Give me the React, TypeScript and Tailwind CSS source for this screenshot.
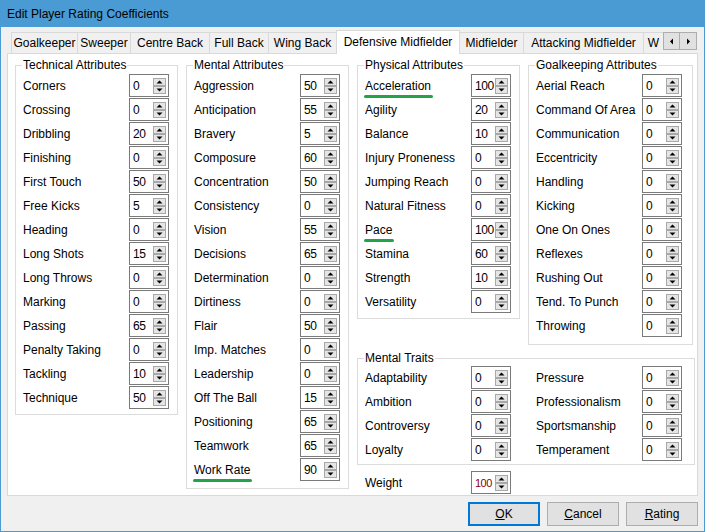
import React from "react";

type Row = [string, string, string?];

const technical: Row[] = [
  ["Corners", "0"], ["Crossing", "0"], ["Dribbling", "20"], ["Finishing", "0"],
  ["First Touch", "50"], ["Free Kicks", "5"], ["Heading", "0"], ["Long Shots", "15"],
  ["Long Throws", "0"], ["Marking", "0"], ["Passing", "65"], ["Penalty Taking", "0"],
  ["Tackling", "10"], ["Technique", "50"],
];
const mental: Row[] = [
  ["Aggression", "50"], ["Anticipation", "55"], ["Bravery", "5"], ["Composure", "60"],
  ["Concentration", "50"], ["Consistency", "0"], ["Vision", "55"], ["Decisions", "65"],
  ["Determination", "0"], ["Dirtiness", "0"], ["Flair", "50"], ["Imp. Matches", "0"],
  ["Leadership", "0"], ["Off The Ball", "15"], ["Positioning", "65"], ["Teamwork", "65"],
  ["Work Rate", "90", "u"],
];
const physical: Row[] = [
  ["Acceleration", "100", "u"], ["Agility", "20"], ["Balance", "10"], ["Injury Proneness", "0"],
  ["Jumping Reach", "0"], ["Natural Fitness", "0"], ["Pace", "100", "u"], ["Stamina", "60"],
  ["Strength", "10"], ["Versatility", "0"],
];
const goalkeeping: Row[] = [
  ["Aerial Reach", "0"], ["Command Of Area", "0"], ["Communication", "0"], ["Eccentricity", "0"],
  ["Handling", "0"], ["Kicking", "0"], ["One On Ones", "0"], ["Reflexes", "0"],
  ["Rushing Out", "0"], ["Tend. To Punch", "0"], ["Throwing", "0"],
];
const traits1: Row[] = [["Adaptability", "0"], ["Ambition", "0"], ["Controversy", "0"], ["Loyalty", "0"]];
const traits2: Row[] = [["Pressure", "0"], ["Professionalism", "0"], ["Sportsmanship", "0"], ["Temperament", "0"]];

const tabs: [string, number, boolean?][] = [
  ["Goalkeeper", 66], ["Sweeper", 53], ["Centre Back", 79], ["Full Back", 59],
  ["Wing Back", 68], ["Defensive Midfielder", 124, true], ["Midfielder", 63],
  ["Attacking Midfielder", 120], ["W", 20],
];

function Arrows() {
  return (
    <svg width="13" height="16" viewBox="0 0 13 16" className="block">
      <rect x="0.5" y="0.5" width="12" height="7" fill="#e5e5e5" stroke="#a8a8a8" />
      <rect x="0.5" y="8.5" width="12" height="7" fill="#e5e5e5" stroke="#a8a8a8" />
      <polygon points="3.5,5.5 9.5,5.5 6.5,2.5" fill="#000" />
      <polygon points="3.5,10.5 9.5,10.5 6.5,13.5" fill="#000" />
    </svg>
  );
}

function Spin({ value, red }: { value: string; red?: boolean }) {
  return (
    <div className="flex h-[23px] w-[40px] items-center border border-[#7a7a7a] bg-white">
      <span
        className={
          red
            ? "flex-1 pl-[3px] pt-[1px] text-[11px] leading-[21px] text-[#8b0000] font-['Liberation_Sans_Narrow','Liberation_Sans',sans-serif] tracking-[-0.5px]"
            : "flex-1 pl-[3px] pt-[1px] leading-[21px] tracking-[-0.4px]"
        }
      >
        {value}
      </span>
      <div className="mr-[2px]">
        <Arrows />
      </div>
    </div>
  );
}

function Label({ text, underline }: { text: string; underline?: boolean }) {
  return (
    <span className="relative inline-block pt-[1px] leading-[23px]">
      {text}
      {underline && (
        <span className="absolute left-[-1px] right-[-2px] top-[21px] h-[3px] rounded-full bg-[#22a34a]" />
      )}
    </span>
  );
}

function Rows({ rows }: { rows: Row[] }) {
  return (
    <div className="flex flex-col">
      {rows.map(([l, v, u]) => (
        <div key={l} className="flex h-[24px] pl-[7px]">
          <div className="w-[106px] whitespace-nowrap">
            <Label text={l} underline={u === "u"} />
          </div>
          <Spin value={v} />
        </div>
      ))}
    </div>
  );
}

function Group({
  title,
  width,
  children,
  pb = "pb-[5px]",
}: {
  title: string;
  width: string;
  children: React.ReactNode;
  pb?: string;
}) {
  return (
    <fieldset className={`border border-[#dcdcdc] ${width} ${pb}`}>
      <legend className="ml-[6px] px-[1px] leading-[16px]">{title}</legend>
      <div className="pt-[1px]">{children}</div>
    </fieldset>
  );
}

export default function App() {
  return (
    <div className="flex h-[532px] w-[705px] flex-col text-[12px] text-black font-['Liberation_Sans',Arial,sans-serif]">
      <div className="flex h-[27px] items-center bg-[#4a9bd3] pl-[7px]">Edit Player Rating Coefficients</div>
      <div className="flex flex-1 flex-col border-x border-b border-[#4a9bd3] bg-[#f0f0f0]">
        {/* tab strip */}
        <div className="relative z-10 mt-[3px] flex h-[24px] w-[697px] items-end pl-[10px]">
          {tabs.map(([name, w, sel], i) =>
            sel ? (
              <div
                key={name}
                style={{ width: w }}
                className="flex h-[24px] shrink-0 items-center justify-center whitespace-nowrap border-x border-t border-[#d9d9d9] bg-white pb-[2px]"
              >
                {name}
              </div>
            ) : (
              <div
                key={name}
                style={{ width: w }}
                className={`mb-[1px] flex h-[21px] shrink-0 items-center justify-center whitespace-nowrap border-t border-[#d9d9d9] bg-[#f0f0f0] ${
                  i === 6 ? "" : "border-l"
                }`}
              >
                {name}
              </div>
            )
          )}
          <div className="absolute left-[662px] top-[2px] flex">
            <div className="flex h-[18px] w-[17px] items-center justify-center border border-[#adadad] bg-[#e1e1e1]">
              <svg width="6" height="7" viewBox="0 0 6 7">
                <polygon points="4,0.5 4,6.5 1,3.5" fill="#000" />
              </svg>
            </div>
            <div className="flex h-[18px] w-[17px] items-center justify-center border border-l-0 border-[#adadad] bg-[#e1e1e1]">
              <svg width="6" height="7" viewBox="0 0 6 7">
                <polygon points="2,0.5 2,6.5 5,3.5" fill="#000" />
              </svg>
            </div>
          </div>
        </div>
        {/* tab page */}
        <div className="-mt-[1px] ml-[6px] flex h-[443px] w-[691px] gap-[8px] border border-[#d9d9d9] bg-white pl-[7px] pt-[3px]">
          <div className="self-start">
            <Group title="Technical Attributes" width="w-[163px]" pb="pb-[4px]">
              <Rows rows={technical} />
            </Group>
          </div>
          <div className="self-start">
            <Group title="Mental Attributes" width="w-[163px]" pb="pb-[6px]">
              <Rows rows={mental} />
            </Group>
          </div>
          <div className="flex flex-col">
            <div className="flex items-start gap-[8px]">
              <Group title="Physical Attributes" width="w-[163px]" pb="pb-[4px]">
                <Rows rows={physical} />
              </Group>
              <Group title="Goalkeeping Attributes" width="w-[165px]" pb="pb-[6px]">
                <Rows rows={goalkeeping} />
              </Group>
            </div>
            <fieldset className="mt-[5px] w-[336px] border border-[#dcdcdc] pb-[2px]">
              <legend className="ml-[6px] px-[1px] leading-[16px]">Mental Traits</legend>
              <div className="flex">
                <div className="w-[171px]">
                  <Rows rows={traits1} />
                </div>
                <div className="w-[165px]">
                  <Rows rows={traits2} />
                </div>
              </div>
            </fieldset>
            <div className="mt-[6px] flex h-[24px] pl-[8px]">
              <div className="w-[106px] pt-[1px] leading-[23px]">Weight</div>
              <Spin value="100" red />
            </div>
          </div>
        </div>
        {/* buttons */}
        <div className="mt-[6px] flex justify-end gap-[7px] pr-[6px]">
          <button className="flex h-[24px] w-[72px] items-center justify-center border-2 border-[#0078d7] bg-[#e1e1e1]">
            <span>
              <span className="underline">O</span>K
            </span>
          </button>
          <button className="flex h-[24px] w-[72px] items-center justify-center border border-[#adadad] bg-[#e1e1e1]">
            <span>
              <span className="underline">C</span>ancel
            </span>
          </button>
          <button className="flex h-[24px] w-[72px] items-center justify-center border border-[#adadad] bg-[#e1e1e1]">
            <span>
              <span className="underline">R</span>ating
            </span>
          </button>
        </div>
      </div>
    </div>
  );
}
